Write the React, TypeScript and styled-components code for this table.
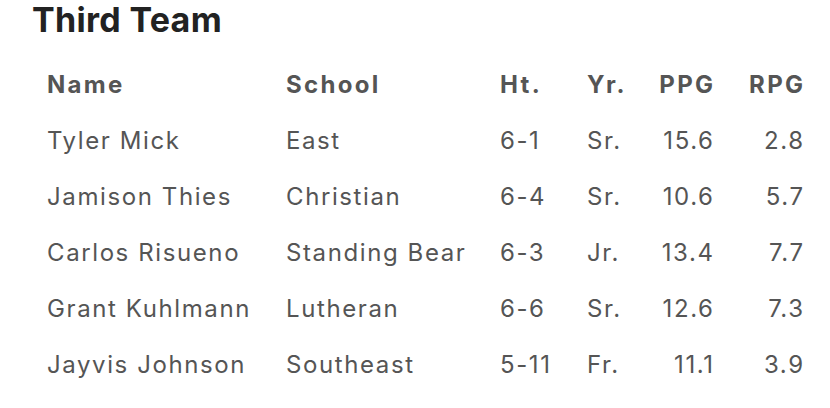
import styled, { createGlobalStyle } from "styled-components"

const Globalstyle = createGlobalStyle`
  body {
    margin: 0;
    background: #ffffff;
    font-family: Inter, "Noto Sans", "Liberation Sans", sans-serif;
  }
`

interface Player {
  name: string
  school: string
  ht: string
  yr: string
  ppg: string
  rpg: string
}

const players: Player[] = [
  { name: "Tyler Mick", school: "East", ht: "6-1", yr: "Sr.", ppg: "15.6", rpg: "2.8" },
  { name: "Jamison Thies", school: "Christian", ht: "6-4", yr: "Sr.", ppg: "10.6", rpg: "5.7" },
  { name: "Carlos Risueno", school: "Standing Bear", ht: "6-3", yr: "Jr.", ppg: "13.4", rpg: "7.7" },
  { name: "Grant Kuhlmann", school: "Lutheran", ht: "6-6", yr: "Sr.", ppg: "12.6", rpg: "7.3" },
  { name: "Jayvis Johnson", school: "Southeast", ht: "5-11", yr: "Fr.", ppg: "11.1", rpg: "3.9" },
]

function App() {
  return (
    <Wrap>
      <Globalstyle />
      <Title>Third Team</Title>
      <Table>
        <colgroup>
          <col style={{ width: 239 }} />
          <col style={{ width: 214 }} />
          <col style={{ width: 87 }} />
          <col style={{ width: 69 }} />
          <col style={{ width: 89 }} />
          <col style={{ width: 90 }} />
        </colgroup>
        <thead>
          <tr>
            <Th>Name</Th>
            <Th>School</Th>
            <Th>Ht.</Th>
            <Th>Yr.</Th>
            <Th $right>PPG</Th>
            <Th $right>RPG</Th>
          </tr>
        </thead>
        <tbody>
          {players.map((p) => (
            <tr key={p.name}>
              <Td>{p.name}</Td>
              <Td>{p.school}</Td>
              <Td>{p.ht}</Td>
              <Td>{p.yr}</Td>
              <Td $right>{p.ppg}</Td>
              <Td $right>{p.rpg}</Td>
            </tr>
          ))}
        </tbody>
      </Table>
    </Wrap>
  )
}

export default App

const Wrap = styled.div`
  padding: 0 0 0 31px;
`

const Title = styled.h2`
  margin: 0;
  padding-left: 1px;
  height: 56px;
  line-height: 40px;
  font-size: 34px;
  font-weight: 700;
  letter-spacing: 0.3px;
  color: #222222;
`

const Table = styled.table`
  border-collapse: collapse;
  table-layout: fixed;
  width: 788px;
`

const Th = styled.th<{ $right?: boolean }>`
  height: 56px;
  padding: 0 ${(p) => (p.$right ? "13.7px" : "16px")} 0 16px;
  text-align: ${(p) => (p.$right ? "right" : "left")};
  font-size: 24px;
  font-weight: 700;
  letter-spacing: 2.3px;
  color: #555555;
  white-space: nowrap;
`

const Td = styled.td<{ $right?: boolean }>`
  height: 56px;
  padding: 0 ${(p) => (p.$right ? "14.4px" : "16px")} 0 16px;
  text-align: ${(p) => (p.$right ? "right" : "left")};
  font-size: 24px;
  font-weight: 400;
  letter-spacing: 1.6px;
  color: #555555;
  white-space: nowrap;
`
